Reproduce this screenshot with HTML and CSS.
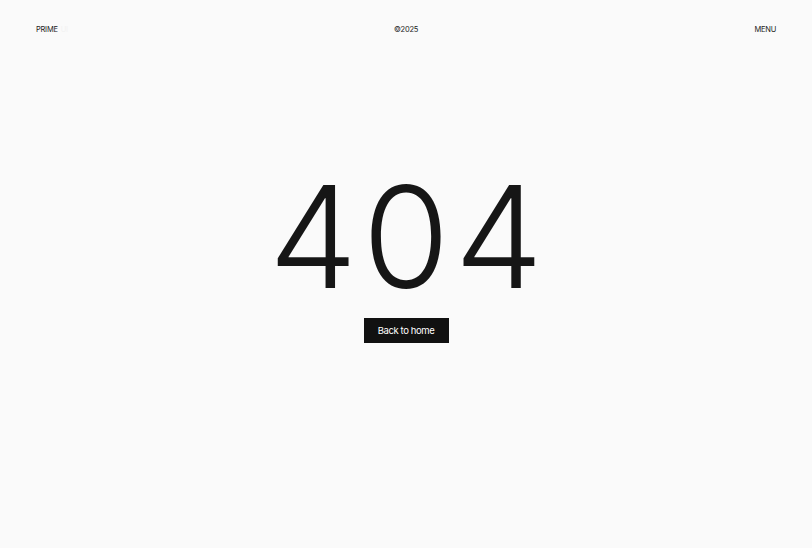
FILE: index.html
```html
<!DOCTYPE html>
<html lang="en">
<head>
<meta charset="utf-8">
<title>404</title>
<link rel="stylesheet" href="styles.css">
</head>
<body>
<div class="page">
  <header class="header">
    <div class="brand">PRIME<span class="brand-faint">UI</span></div>
    <div class="copy">©2025</div>
    <div class="menu">MENU</div>
  </header>
  <main class="main">
    <h1 class="code">404</h1>
    <a class="btn" href="#">Back to home</a>
  </main>
</div>
</body>
</html>
```
FILE: styles.css
```css
html, body {
  margin: 0;
  padding: 0;
  background: #fafafa;
}
body {
  font-family: Inter, "Noto Sans", sans-serif;
  color: #1a1a1a;
}
.page {
  height: 548px;
  display: flex;
  flex-direction: column;
}
.header {
  display: grid;
  grid-template-columns: 1fr auto 1fr;
  align-items: center;
  padding: 25px 36px 0 36px;
  font-size: 7.5px;
  line-height: 10px;
  letter-spacing: -0.25px;
  color: #222;
}
.brand { justify-self: start; }
.brand-faint { color: #f2f2f2; margin-left: 3px; }
.copy { justify-self: center; }
.menu { justify-self: end; }
.main {
  display: flex;
  flex-direction: column;
  align-items: center;
  padding-top: 131px;
}
.code {
  margin: 0;
  padding-left: 5px;
  font-size: 141px;
  font-weight: 350;
  line-height: 1;
  letter-spacing: 5px;
  color: #161616;
}
.btn {
  margin-top: 11px;
  display: inline-flex;
  align-items: center;
  justify-content: center;
  width: 85px;
  height: 25px;
  background: #111;
  color: #fff;
  font-size: 9.5px;
  letter-spacing: -0.4px;
  text-decoration: none;
}
```
